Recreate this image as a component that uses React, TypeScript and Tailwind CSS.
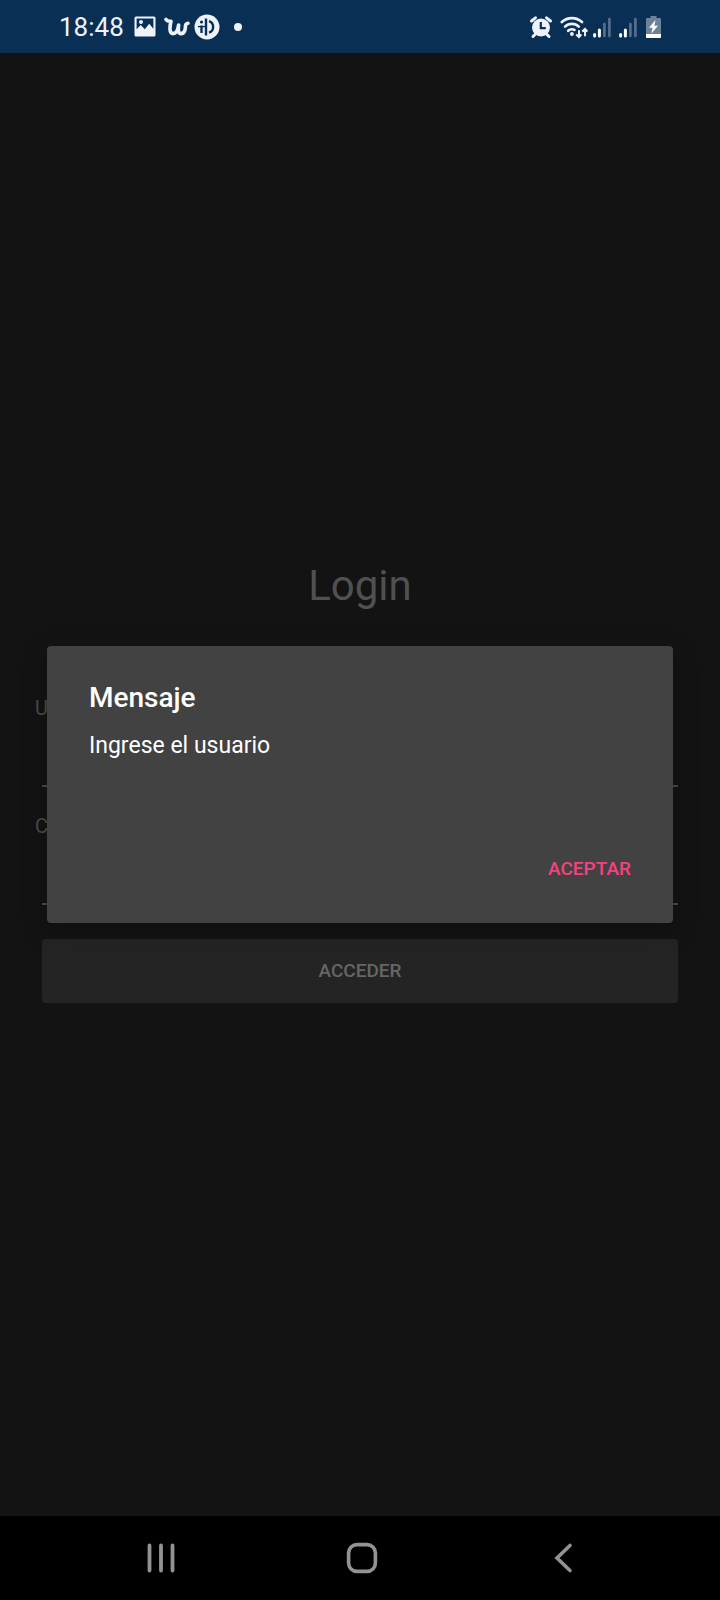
import type { ReactNode } from "react";

function Icon({ w, className, children }: { w: number; className: string; children: ReactNode }) {
  return (
    <svg viewBox={`0 0 ${w} 24`} className={`h-6 shrink-0 ${className}`} fill="none" aria-hidden="true">
      {children}
    </svg>
  );
}

function SignalIcon() {
  return (
    <Icon w={18} className="w-[18px]">
      <g strokeWidth="3" strokeLinecap="round">
        <path d="M1.6 19.5V21" stroke="#fff" />
        <path d="M6.4 15V21" stroke="#fff" />
        <path d="M11.4 9V21" stroke="#56718f" strokeWidth="2.6" />
        <path d="M16.4 4V21" stroke="#56718f" strokeWidth="2.6" />
      </g>
    </Icon>
  );
}

function StatusBar() {
  return (
    <header className="flex h-[53px] shrink-0 items-center justify-between bg-[#0a2f54] pr-[59px] pl-[59px] text-[#eef3fb]">
      <div className="flex items-center">
        <time className="text-[26px] leading-8">18:48</time>
        <Icon w={22} className="ml-[10px] w-[22px]">
          <path
            fill="currentColor"
            fillRule="evenodd"
            d="M2 1.5h18a1.5 1.5 0 0 1 1.5 1.5v17a1.5 1.5 0 0 1-1.5 1.5H2A1.5 1.5 0 0 1 .5 20V3A1.5 1.5 0 0 1 2 1.5ZM2.6 3.6v10.6l4.1-4.2 4.1 4.3 4.4-5.6 4.2 5V3.6Z"
          />
          <circle cx="7" cy="7" r="2" fill="currentColor" />
        </Icon>
        <Icon w={26} className="ml-2 w-[26px]">
          <path
            d="M2 4.500C3.500 6.500 5 6.500 7 6.200C5.800 11 4.800 18.600 9 18.600C12 18.600 14 14.500 14.600 10C14 14.600 14.200 18.600 17 18.600C20.400 18.600 21.600 14.500 21.400 11Q21.800 8.400 24 8.200"
            stroke="currentColor"
            strokeWidth="3.6"
            strokeLinecap="round"
            strokeLinejoin="round"
          />
        </Icon>
        <svg viewBox="0 0 26 26" className="ml-1 h-[26px] w-[26px]" fill="none" aria-hidden="true">
          <circle cx="13" cy="13" r="12.5" fill="currentColor" />
          <g stroke="#0a2f54" strokeWidth="2.4">
            <path d="M7.500 11.500V19" />
            <path d="M12 4.500V21.500" />
            <path d="M15 7.200A6 6 0 0 1 15 18.600" />
            <path d="M4 12.600H12" strokeWidth="1.4" />
          </g>
          <circle cx="7.500" cy="8" r="1.600" fill="#0a2f54" />
        </svg>
        <span className="ml-[14px] h-2 w-2 rounded-full bg-current" />
      </div>
      <div className="flex items-center">
        <Icon w={24} className="w-6">
          <circle cx="12" cy="12.5" r="9" fill="currentColor" />
          <g stroke="currentColor" strokeWidth="3" strokeLinecap="round">
            <path d="M2.5 6 6.5 2.8M21.5 6 17.5 2.8M4 21.5 6.5 19M20 21.5 17.5 19" />
          </g>
          <path d="M11.8 7v6.2h5" stroke="#0a2f54" strokeWidth="2.2" />
        </Icon>
        <Icon w={28} className="ml-[7px] w-7">
          <g stroke="currentColor" strokeWidth="2.6" strokeLinecap="round">
            <path d="M1.8 7A15 15 0 0 1 22 7" />
            <path d="M5 11.6A10 10 0 0 1 18.8 11.6" />
            <path d="M8.200 15.800A5.600 5.600 0 0 1 14.500 15" />
          </g>
          <circle cx="11.9" cy="19" r="1.9" fill="currentColor" />
          <path
            d="M19 15.2V22M16.2 19.4 19 22l2.4-2.6M25 21.2V14M22.2 16.600 25 14l2.4 2.6"
            stroke="currentColor"
            strokeWidth="2"
          />
        </Icon>
        <span className="ml-[5px] flex gap-2">
          <SignalIcon />
          <SignalIcon />
        </span>
        <Icon w={15} className="ml-[9px] w-[15px]">
          <path d="M4.5 1h6v2H14a1 1 0 0 1 1 1v18a1 1 0 0 1-1 1H1a1 1 0 0 1-1-1V4a1 1 0 0 1 1-1h3.5Z" fill="#6c8299" />
          <path d="M0 19h15v3a1 1 0 0 1-1 1H1a1 1 0 0 1-1-1Z" fill="#fff" />
          <path d="M9.5 5 3 12.8h3.6L5.3 18.5 12 10.7H8.4Z" fill="#fff" />
        </Icon>
      </div>
    </header>
  );
}

function Field({ id, label, type }: { id: string; label: string; type: string }) {
  return (
    <div className="flex flex-col">
      <label htmlFor={id} className="text-xl leading-6 text-[#4a4a4a]">
        {label}
      </label>
      <input
        id={id}
        type={type}
        className="mx-[7px] h-[67px] border-b-2 border-[#484848] bg-transparent text-2xl text-[#5a5a5a] outline-none"
      />
    </div>
  );
}

function MessageDialog() {
  return (
    <div className="absolute inset-0 flex items-center px-[47px]">
      <section
        role="alertdialog"
        aria-modal="true"
        aria-labelledby="dialog-title"
        aria-describedby="dialog-text"
        className="w-full rounded-[4px] bg-[#424242] px-[42px] pt-9 pb-[38px] shadow-[0_8px_28px_rgba(0,0,0,0.2)]"
      >
        <h2 id="dialog-title" className="text-[28px] leading-8 font-medium text-white">
          Mensaje
        </h2>
        <p id="dialog-text" className="mt-[18px] text-[23px] leading-7 text-white">
          Ingrese el usuario
        </p>
        <div className="mt-[93px] flex justify-end">
          <button type="button" className="text-[19px] leading-8 font-medium text-[#f5427f]">
            ACEPTAR
          </button>
        </div>
      </section>
    </div>
  );
}

function NavBar() {
  return (
    <nav className="flex h-[84px] shrink-0 items-center justify-around bg-black pr-[56px] pl-[60px] text-[#939393]">
      <button type="button" aria-label="Recientes" className="flex w-12 justify-center">
        <svg viewBox="0 0 32 32" className="h-8 w-8" stroke="currentColor" strokeWidth="3.8" strokeLinecap="round" fill="none">
          <path d="M4.5 3.5v25M16 3.5v25M27.5 3.5v25" />
        </svg>
      </button>
      <button type="button" aria-label="Inicio" className="flex w-12 justify-center">
        <svg viewBox="0 0 32 32" className="h-8 w-8" stroke="currentColor" strokeWidth="3.6" fill="none">
          <rect x="2.6" y="2.6" width="26.8" height="26.8" rx="8.5" />
        </svg>
      </button>
      <button type="button" aria-label="Atrás" className="flex w-12 justify-center">
        <svg viewBox="0 0 32 32" className="h-8 w-8" stroke="currentColor" strokeWidth="3.6" strokeLinecap="round" fill="none">
          <path d="M23 3.5 10 16l13 12.5" />
        </svg>
      </button>
    </nav>
  );
}

export default function App() {
  return (
    <div className="flex min-h-screen flex-col bg-[#131313] font-[Roboto,sans-serif]">
      <StatusBar />
      <main className="relative flex grow flex-col justify-center px-[35px]">
        <form onSubmit={(event) => event.preventDefault()}>
          <h1 className="text-center text-[42px] leading-[50px] text-[#505050]">Login</h1>
          <div className="mt-[85px] flex flex-col gap-[27px]">
            <Field id="usuario" label="Usuario" type="text" />
            <Field id="clave" label="Contraseña" type="password" />
          </div>
          <div className="mt-[34px] px-[7px] pb-[6px]">
            <button
              type="submit"
              className="h-16 w-full rounded-[4px] bg-[#242424] pt-[2px] text-[19px] font-medium text-[#666666]"
            >
              ACCEDER
            </button>
          </div>
        </form>
        <MessageDialog />
      </main>
      <NavBar />
    </div>
  );
}
